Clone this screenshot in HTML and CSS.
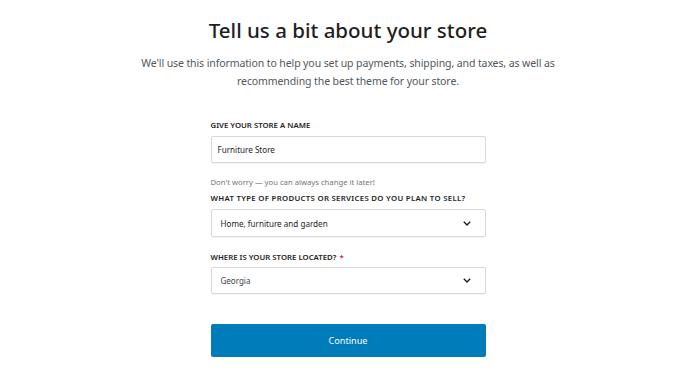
FILE: index.html
```html
<!DOCTYPE html>
<html lang="en">
<head>
<meta charset="utf-8">
<title>Tell us a bit about your store</title>
<link rel="stylesheet" href="styles.css">
</head>
<body>
<main class="page">
  <h1 class="title">Tell us a bit about your store</h1>
  <p class="intro">We'll use this information to help you set up payments, shipping, and taxes, as well as<br>recommending the best theme for your store.</p>
  <form class="form">
    <label class="label label-first">Give your store a name</label>
    <div class="field"><span class="value">Furniture Store</span></div>
    <p class="help">Don't worry — you can always change it later!</p>
    <label class="label label-second">What type of products or services do you plan to sell?</label>
    <div class="field select"><span class="value">Home, furniture and garden</span>
      <svg class="chev" width="8" height="5" viewBox="0 0 8 5"><path d="M0.8 0.8L4 4 7.2 0.8" fill="none" stroke="#1e1e1e" stroke-width="1.4"/></svg>
    </div>
    <label class="label label-third">Where is your store located?<span class="req">*</span></label>
    <div class="field select select-loc"><span class="value value-loc">Georgia</span>
      <svg class="chev" width="8" height="5" viewBox="0 0 8 5"><path d="M0.8 0.8L4 4 7.2 0.8" fill="none" stroke="#1e1e1e" stroke-width="1.4"/></svg>
    </div>
    <button type="button" class="btn">Continue</button>
  </form>
</main>
</body>
</html>
```
FILE: styles.css
```css
html, body { margin: 0; padding: 0; background: #fff; }
body { font-family: "Noto Sans", "Open Sans", sans-serif; color: #1e1e1e; }
.page { padding: 16px 0 0 16px; text-align: center; }
.title { margin: 0; font-size: 20.5px; line-height: 28px; font-weight: 500; color: #1e1e1e; }
.intro { margin: 10px 0 0; font-size: 10.5px; letter-spacing: -0.1px; line-height: 18px; color: #50575e; }
.form { width: 275px; margin: 29px auto 0; display: flex; flex-direction: column; text-align: left; }
.label { display: block; font-size: 7.8px; line-height: 12px; font-weight: 600; text-transform: uppercase; color: #1e1e1e; }
.req { color: #cc1818; margin-left: 3px; }
.label-second { margin-top: 3px; letter-spacing: 0.3px; }
.label-third { margin-top: 14px; }
.field { box-sizing: border-box; height: 27px; margin-top: 5px; border: 1px solid #d9d9d9; border-radius: 2px; box-shadow: 0 1px 1px rgba(0,0,0,0.05); display: flex; align-items: center; padding: 0 14px 0 6px; }
.select { height: 28px; justify-content: space-between; padding-left: 9px; }
.select-loc { margin-top: 4px; height: 27px; }
.value { font-size: 8.1px; color: #1e1e1e; }
.value-loc { font-size: 8px; color: #3c434a; }
.chev { display: block; }
.help { margin: 12px 0 0; font-size: 7.7px; line-height: 14px; color: #757575; }
.btn { margin-top: 30px; height: 33px; border: 0; border-radius: 2px; background: #007cba; color: #fff; font-family: inherit; font-size: 9.1px; cursor: pointer; }
```
